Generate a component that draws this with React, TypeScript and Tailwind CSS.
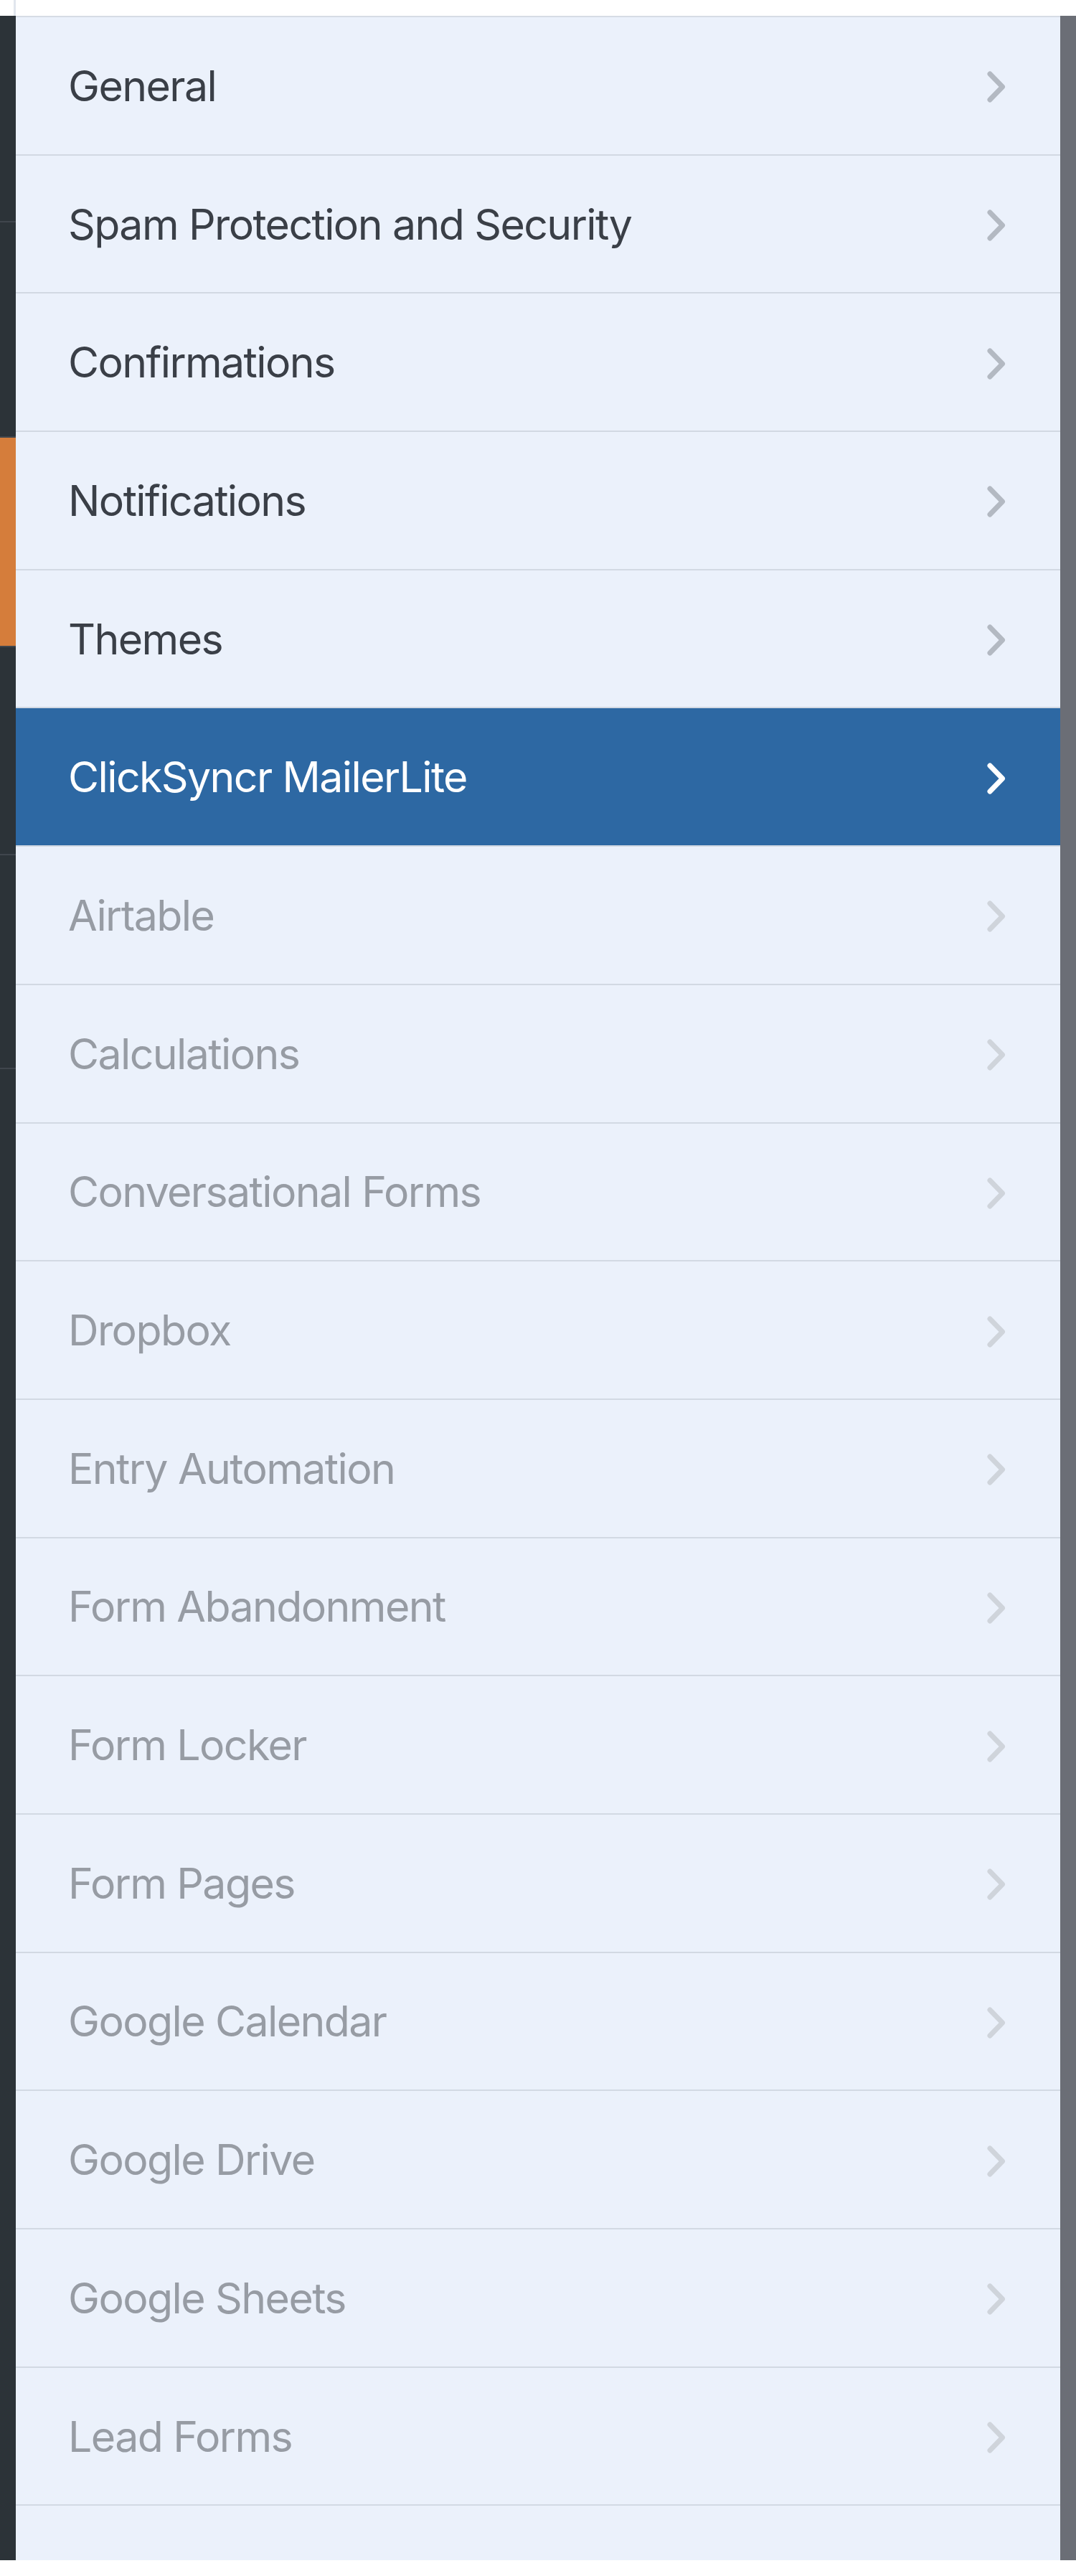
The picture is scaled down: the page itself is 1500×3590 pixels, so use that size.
import React from "react";

const items: { label: string; enabled: boolean; active?: boolean }[] = [
  { label: "General", enabled: true },
  { label: "Spam Protection and Security", enabled: true },
  { label: "Confirmations", enabled: true },
  { label: "Notifications", enabled: true },
  { label: "Themes", enabled: true },
  { label: "ClickSyncr MailerLite", enabled: true, active: true },
  { label: "Airtable", enabled: false },
  { label: "Calculations", enabled: false },
  { label: "Conversational Forms", enabled: false },
  { label: "Dropbox", enabled: false },
  { label: "Entry Automation", enabled: false },
  { label: "Form Abandonment", enabled: false },
  { label: "Form Locker", enabled: false },
  { label: "Form Pages", enabled: false },
  { label: "Google Calendar", enabled: false },
  { label: "Google Drive", enabled: false },
  { label: "Google Sheets", enabled: false },
  { label: "Lead Forms", enabled: false },
];

function Chevron({ color }: { color: string }) {
  return (
    <svg width="28" height="46" viewBox="0 0 28 46" fill="none" className="mt-1 shrink-0">
      <path d="M5 5 L22.5 23 L5 41" stroke={color} strokeWidth="7" strokeLinecap="round" strokeLinejoin="round" />
    </svg>
  );
}

function Row({ label, enabled, active }: { label: string; enabled: boolean; active?: boolean }) {
  const bg = active ? "bg-[#2d68a3]" : "bg-[#ebf1fb]";
  const text = active ? "text-white" : enabled ? "text-[#3a3f47]" : "text-[#979ca4]";
  const chev = active ? "#ffffff" : enabled ? "#b3b9c2" : "#cfd4db";
  return (
    <div className={`h-[192.7px] shrink-0 border-b-2 border-[#d2d9e3] ${bg} flex items-center justify-between pl-[73px] pr-[75px]`}>
      <span className={`${text} text-[59px] leading-none tracking-[-1.6px]`}>{label}</span>
      <Chevron color={chev} />
    </div>
  );
}

export default function App() {
  return (
    <div className="w-[1500px] h-[3590px] bg-white flex flex-col" style={{ fontFamily: "Inter, 'Noto Sans', sans-serif" }}>
      <div className="h-[22px] shrink-0 flex">
        <div className="w-[19px] bg-white" />
        <div className="w-[3px] bg-[#e1e6ed]" />
        <div className="flex-1 bg-white" />
      </div>
      <div className="h-[3546px] shrink-0 flex">
        <div className="w-[22px] shrink-0 bg-[#2c3338] flex flex-col">
          <div className="h-[288px] shrink-0 border-b-2 border-[#40464d]" />
          <div className="h-[300px] shrink-0 border-b-2 border-[#40464d]" />
          <div className="h-[290px] shrink-0 bg-[#d57d3b]" />
          <div className="h-[292px] shrink-0 border-t-2 border-b-2 border-[#40464d]" />
          <div className="h-[298px] shrink-0 border-b-2 border-[#40464d]" />
          <div className="flex-1" />
        </div>
        <div className="flex-1 flex flex-col bg-[#ebf1fb] overflow-hidden border-t-2 border-[#d6dce5]">
          {items.map((it) => (
            <Row key={it.label} {...it} />
          ))}
          <div className="flex-1 bg-[#ebf1fb]" />
        </div>
        <div className="w-[22px] shrink-0 bg-[#6b6e76]" />
      </div>
      <div className="flex-1 bg-white" />
    </div>
  );
}
